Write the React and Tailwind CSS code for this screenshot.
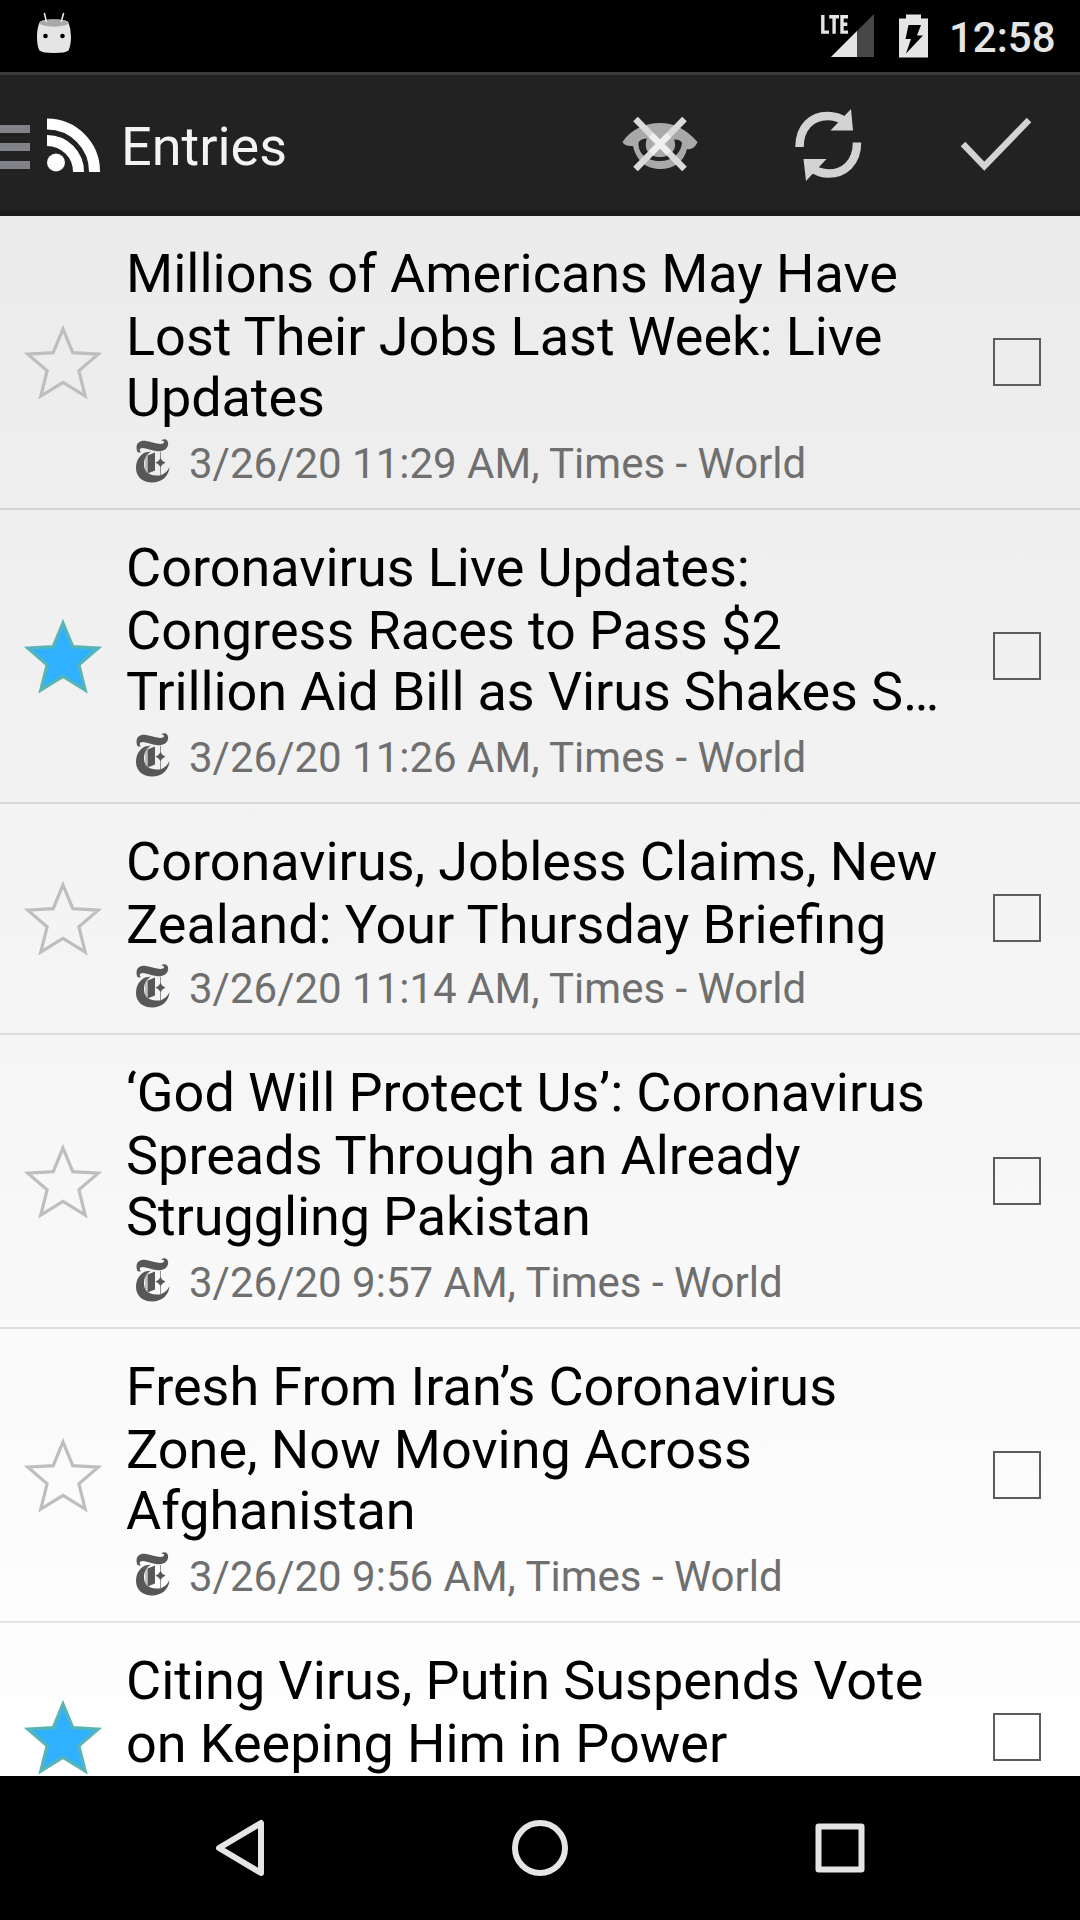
const FONT = "font-['Roboto',sans-serif]";

const entries = [
  {
    lines: ["Millions of Americans May Have", "Lost Their Jobs Last Week: Live", "Updates"],
    meta: "3/26/20 11:29 AM, Times - World",
    starred: false,
  },
  {
    lines: ["Coronavirus Live Updates:", "Congress Races to Pass $2", "Trillion Aid Bill as Virus Shakes S…"],
    meta: "3/26/20 11:26 AM, Times - World",
    starred: true,
  },
  {
    lines: ["Coronavirus, Jobless Claims, New", "Zealand: Your Thursday Briefing"],
    meta: "3/26/20 11:14 AM, Times - World",
    starred: false,
  },
  {
    lines: ["‘God Will Protect Us’: Coronavirus", "Spreads Through an Already", "Struggling Pakistan"],
    meta: "3/26/20 9:57 AM, Times - World",
    starred: false,
  },
  {
    lines: ["Fresh From Iran’s Coronavirus", "Zone, Now Moving Across", "Afghanistan"],
    meta: "3/26/20 9:56 AM, Times - World",
    starred: false,
  },
  {
    lines: ["Citing Virus, Putin Suspends Vote", "on Keeping Him in Power"],
    starred: true,
  },
];

function AndroidIcon() {
  return (
    <svg className="ml-9 h-[42px] w-9 shrink-0" viewBox="0 0 36 42">
      <path d="M3.5 10.5Q4 7.500 18 7.500T32.500 10.500Q35 17 35 25T32.500 38.500Q30 41 18 41T3.500 38.500Q1 34 1 25T3.500 10.500Z" fill="#e5e5e5" />
      <ellipse cx="18" cy="11" rx="14.300" ry="3.700" fill="#a9a9a9" />
      <path d="M8.500 1.500L10.300 9.500M27.500 1.500L25.300 9.500" stroke="#e5e5e5" strokeWidth="1.600" strokeLinecap="round" />
      <circle cx="9.500" cy="24" r="2.300" fill="#000" />
      <circle cx="26.500" cy="24" r="2.300" fill="#000" />
    </svg>
  );
}

function StatusBar() {
  return (
    <header className="flex h-[72px] shrink-0 items-start bg-black text-[#e5e5e5]">
      <div className="flex flex-1 pt-[12px]">
        <AndroidIcon />
      </div>
      <svg className="mt-3 h-12 w-[56px]" viewBox="820 12 56 48">
        <path d="M831 57L874 14V57Z" fill="#474747" />
        <path d="M831 57L857 31V57Z" fill="#e5e5e5" />
        <path d="M822.800 15V32.100H829M829.200 16.700H839M834.100 16.700V33.700M848 16.700H842V32.100H848M842 24.300H847.300" fill="none" stroke="#e5e5e5" strokeWidth="3.400" />
      </svg>
      <svg className="mt-3 ml-[22px] h-12 w-8" viewBox="898 12 32 48">
        <path d="M906 14.500H921V18.500H928V57.500H899V18.500H906Z" fill="#e5e5e5" />
        <path d="M908.500 25H921L917 35.500H923L906 53.500L911 39H905.500Z" fill="#000" />
      </svg>
      <span className="mt-[13px] ml-[19px] w-[131px] text-[42px] leading-[49px] font-medium whitespace-nowrap">12:58</span>
    </header>
  );
}

function RssIcon() {
  return (
    <svg className="mt-[3px] ml-[15px] h-14 w-14 shrink-0" viewBox="45 115 56 56">
      <circle cx="56" cy="161.500" r="9" fill="#fff" />
      <path d="M47 139.500A31.500 31.500 0 0 1 78.500 171M47 123A47.500 47.500 0 0 1 94.500 171" fill="none" stroke="#fff" strokeWidth="11" />
    </svg>
  );
}

function EyeOffIcon() {
  return (
    <svg className="h-24 w-24" viewBox="612 96 96 96">
      <path
        fillRule="evenodd"
        d="M622.500 142C630 130 645 123 660 123S687 130 697.500 142C695.500 147 691.500 150 687 149C684 162 674 169 660 169S636 160 633 146C629 146 624.500 146 622.500 142ZM638.500 142.500C638 154 647 161 660 161S681 153 682 143C681 140.500 678 139 674 139.500C678 149 671 157 660 157S643 149 647 138.500C643 138.500 640 140 638.500 142.500Z"
        fill="#a9a9a9"
      />
      <path d="M635.500 119L684.500 169M684.500 119L635.500 169" stroke="#dadada" strokeWidth="6.500" />
      <path d="M651 135L669 153M669 135L651 153" stroke="#efefef" strokeWidth="6.500" />
    </svg>
  );
}

function RefreshIcon() {
  return (
    <svg className="h-24 w-24" viewBox="780 96 96 96">
      <path d="M799.500 147C799.500 127 812 116 827.500 116C835 116 841 118.500 845 121.500M857 142.500C857 163 844 173.500 828.500 173.500C822 173.500 816 171 812 168" fill="none" stroke="#d3d3d3" strokeWidth="8.500" />
      <path d="M851 109L853 130.500H830.500ZM803.500 159H826.500L806 181Z" fill="#d3d3d3" />
    </svg>
  );
}

function CheckIcon() {
  return (
    <svg className="h-24 w-24" viewBox="948 96 96 96">
      <path d="M963 144L984.300 166.300L1029 120" fill="none" stroke="#d3d3d3" strokeWidth="6.300" />
    </svg>
  );
}

function ActionBar() {
  return (
    <div className="flex h-36 shrink-0 items-center border-t-[3px] border-b-[6px] border-t-[#3a3a3a] border-b-[#1c1c1c] bg-[#222222]">
      <div className="mt-2 flex h-11 w-[30px] shrink-0 flex-col justify-between">
        <div className="h-2 bg-[#828388]" />
        <div className="h-2 bg-[#828388]" />
        <div className="h-2 bg-[#828388]" />
      </div>
      <RssIcon />
      <h1 className="mt-2 ml-5 flex-1 text-[54px] leading-[64px] font-normal text-[#f3f3f3]">Entries</h1>
      <div className="mt-[3px] mr-9 flex gap-[72px]">
        <EyeOffIcon />
        <RefreshIcon />
        <CheckIcon />
      </div>
    </div>
  );
}

function Star({ starred }) {
  return (
    <svg className="h-20 w-[82px] shrink-0" viewBox="0 0 82 80">
      <path
        d="M41 7L50.800 30.700L76.200 32.200L56.900 48.800L63.200 74L41 60.300L18.800 74L25.100 48.800L5.800 32.200L31.200 30.700Z"
        fill={starred ? "#30b1ff" : "none"}
        stroke={starred ? "#58b5b5" : "#bebebe"}
        strokeWidth="3.200"
      />
    </svg>
  );
}

function TimesIcon() {
  return (
    <svg className="h-[44px] w-9 shrink-0" viewBox="0 0 36 44">
      <path d="M2 12C0 4 5 1 11 2C17 3 24 6 28 4.500C30 3.500 29 1 26 1.500C30-1.500 34 1 33 6C32 11 27 13 21 12C14 11 9 7.500 5.500 9.500C4 10.500 5 12.500 6 13C4 14 2.500 13.500 2 12Z" fill="#575757" />
      <path d="M10 13.500C4 16.500 1 22 1 29C1 38 8 43.500 17 43.500C27 43.500 34 37 34.500 28C31.500 34 27 37 21.500 36.500C12.500 36 9 32 9 25C9 20 11 16 16 12.500Z" fill="#575757" />
      <path d="M12.500 16.500L20 13.500V31.500L12.500 34.500Z" fill="#575757" />
      <path d="M25.500 13V36M11 15V34" stroke="#777" strokeWidth="0.800" />
      <path d="M25.500 19Q27 22.500 30.500 23.500Q27 25 25.500 28Q24 25 20.500 23.500Q24 22.500 25.500 19Z" fill="#575757" />
    </svg>
  );
}

function Entry({ entry }) {
  const threeLines = entry.lines.length === 3;
  return (
    <li
      className={
        threeLines
          ? "flex h-[294px] shrink-0 items-center border-b-2 border-black/10"
          : "flex h-[231px] shrink-0 items-center border-b-2 border-black/10"
      }
    >
      <div className={threeLines ? "mb-px ml-[22px] flex w-[104px] shrink-0" : "mb-[2px] ml-[22px] flex w-[104px] shrink-0"}>
        <Star starred={entry.starred} />
      </div>
      <div className="flex h-full flex-1 flex-col pt-[26px]">
        <h2 className="text-[54px] leading-[63px] font-normal whitespace-nowrap text-black [word-spacing:-0.25px]">
          {entry.lines.map((line, i) => (
            <span key={line} className={i === 2 ? "-mt-[2px] block tracking-[-0.08px]" : "block"}>
              {line}
            </span>
          ))}
        </h2>
        {entry.meta && (
          <div className={threeLines ? "mt-[10px] flex items-start pl-[9px]" : "mt-[8px] flex items-start pl-[9px]"}>
            <TimesIcon />
            <p className="ml-[18px] text-[42px] leading-[49px] whitespace-nowrap text-[#6f6f6f]">{entry.meta}</p>
          </div>
        )}
      </div>
      <div
        className={
          threeLines
            ? "mr-[39px] h-12 w-12 shrink-0 border-2 border-[#5c5c5c]"
            : "mr-[39px] mb-px h-12 w-12 shrink-0 border-2 border-[#5c5c5c]"
        }
      />
    </li>
  );
}

function NavBar() {
  return (
    <nav className="flex h-36 shrink-0 items-center justify-center gap-[156px] bg-black">
      <svg className="h-36 w-36" viewBox="168 1776 144 144" fill="none" stroke="#e5e5e5" strokeWidth="6" strokeLinejoin="round">
        <path d="M261 1823V1873L219 1848Z" />
      </svg>
      <svg className="h-36 w-36" viewBox="468 1776 144 144" fill="none" stroke="#e5e5e5" strokeWidth="6">
        <circle cx="540" cy="1848" r="25" />
      </svg>
      <svg className="h-36 w-36" viewBox="768 1776 144 144" fill="none" stroke="#e5e5e5" strokeWidth="6" strokeLinejoin="round">
        <path d="M818.500 1826.500H861.500V1869.500H818.500Z" />
      </svg>
    </nav>
  );
}

export default function App() {
  return (
    <div className={"flex h-[1920px] w-[1080px] flex-col overflow-hidden " + FONT}>
      <StatusBar />
      <ActionBar />
      <ul className="flex flex-1 flex-col overflow-hidden bg-linear-to-b from-[#ebebeb] to-white">
        {entries.map((entry) => (
          <Entry key={entry.lines[0]} entry={entry} />
        ))}
      </ul>
      <NavBar />
    </div>
  );
}
